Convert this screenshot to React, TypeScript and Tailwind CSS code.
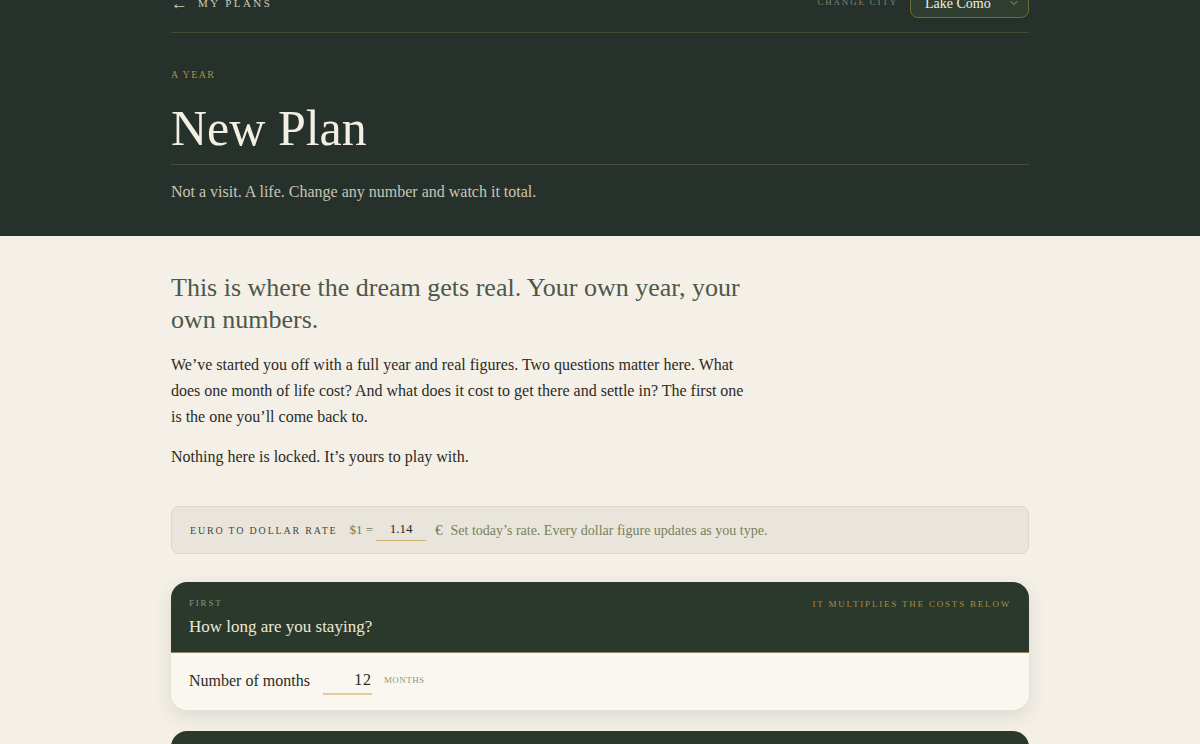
import { ChevronDown } from "lucide-react";

const serif = "font-['Liberation_Serif','Times_New_Roman',serif]";

const App = () => {
  return (
    <div className={`min-h-screen bg-[#f4f0e8] ${serif} -mt-[12px]`}>
      {/* Header */}
      <header className="bg-[#25312a]">
        <div className="mx-auto max-w-[858px]">
          <div className="flex h-[30px] items-center justify-between">
            <a className="flex items-center gap-[10px] text-[11px] uppercase tracking-[0.22em] text-[#cfcbb8]">
              <span className="text-[17px] leading-none tracking-normal">←</span>
              My Plans
            </a>
            <div className="flex items-center gap-3">
              <span className="text-[9px] uppercase tracking-[0.2em] text-[#7d8777]">
                Change City
              </span>
              <div className="flex h-[30px] w-[119px] items-center justify-between rounded-lg border border-[#6e6b3c] bg-[#303d31] pl-[14px] pr-2">
                <span className="text-[14px] text-[#f1ede0]">Lake Como</span>
                <ChevronDown size={12} className="text-[#b59a4a]" />
              </div>
            </div>
          </div>
          <div className="mt-[14px] border-b border-[#434a31]" />

          <p className="mt-[34px] text-[10px] uppercase tracking-[0.14em] text-[#b0903e]">
            A Year
          </p>
          <h1 className="mt-[16px] text-[50px] leading-[60px] text-[#f3efe2]">
            New Plan
          </h1>
          <div className="mt-[6px] border-b border-[#48503a]" />
          <p className="pb-[32px] pt-[15px] text-[16px] leading-6 text-[#c9c6b4]">
            Not a visit. A life. Change any number and watch it total.
          </p>
        </div>
      </header>

      {/* Main */}
      <main className="mx-auto max-w-[858px] pt-[36px]">
        <h2 className="max-w-[580px] text-[26px] font-light leading-[32px] text-[#4d574a]">
          This is where the dream gets real. Your own year, your own numbers.
        </h2>
        <p className="mt-[16px] max-w-[580px] text-[16px] leading-[26px] text-[#2b2b24]">
          We’ve started you off with a full year and real figures. Two questions
          matter here. What does one month of life cost? And what does it cost to
          get there and settle in? The first one is the one you’ll come back to.
        </p>
        <p className="mt-[14px] text-[16px] leading-[26px] text-[#2b2b24]">
          Nothing here is locked. It’s yours to play with.
        </p>

        {/* Rate */}
        <div className="mt-[36px] flex h-[48px] items-center rounded-lg border border-[#dcd7cb] bg-[#e9e5dc] px-[18px]">
          <span className="text-[10px] uppercase tracking-[0.18em] text-[#45483c]">
            Euro to dollar rate
          </span>
          <span className="ml-[12px] text-[13px] text-[#6c7a55]">$1 =</span>
          <span className="ml-[3px] w-[50px] border-b border-[#cdb06a] pb-[2px] text-center text-[13px] text-[#2b2b24]">
            1.14
          </span>
          <span className="ml-[9px] text-[15px] text-[#6c7a55]">€</span>
          <span className="ml-[8px] text-[14px] text-[#76825a]">
            Set today’s rate. Every dollar figure updates as you type.
          </span>
        </div>

        {/* Card */}
        <section className="mt-[28px] overflow-hidden rounded-2xl bg-[#faf7f1] shadow-[0_6px_18px_rgba(60,50,30,0.12)]">
          <div className="flex items-start justify-between border-b border-[#8f865c] bg-[#2b392c] px-[18px] pb-[13px] pt-[15px]">
            <div>
              <p className="text-[9px] uppercase tracking-[0.2em] text-[#8d9383]">
                First
              </p>
              <h3 className="mt-[4px] text-[17px] leading-6 text-[#ebe7d9]">
                How long are you staying?
              </h3>
            </div>
            <p className="pt-[1px] text-[9px] uppercase tracking-[0.2em] text-[#a58c47]">
              It multiplies the costs below
            </p>
          </div>
          <div className="flex h-[57px] items-center px-[18px]">
            <span className="text-[16px] text-[#2b2b24]">Number of months</span>
            <span className="ml-[13px] w-[49px] border-b-2 border-[#e1cd95] pb-[1px] text-right text-[16px] tracking-wider text-[#2b2b24]">
              12
            </span>
            <span className="ml-[12px] text-[9px] uppercase tracking-wider text-[#8a9a78]">
              Months
            </span>
          </div>
        </section>

        <section className="mt-[21px] h-[40px] rounded-t-2xl bg-[#2b392c]" />
      </main>
    </div>
  );
};

export default App;
